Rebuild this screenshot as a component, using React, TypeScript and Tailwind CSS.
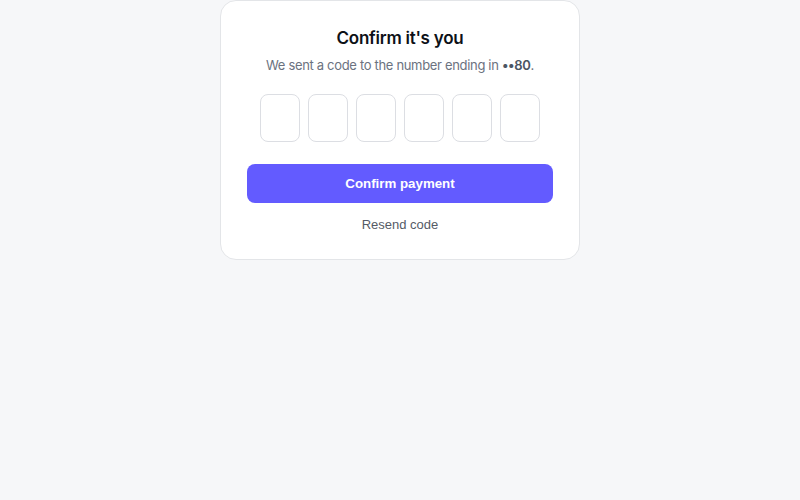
export default function App() {
  return (
    <div className="min-h-[500px] w-full bg-[#f6f7f9] flex justify-center">
      <div className="w-[360px] h-[260px] bg-white border border-[#e3e5e8] rounded-[16px] px-[26px] pt-[23px] pb-6 flex flex-col items-center" style={{ fontFamily: "Inter, 'Noto Sans', sans-serif" }}>
        <h1 className="text-[17px] leading-[28px] font-semibold tracking-[-0.015em] text-[#0d1117]">Confirm it's you</h1>
        <p className="mt-[3px] text-[13px] leading-[20px] tracking-[-0.025em] text-[#6b7280]">
          We sent a code to the number ending in <span className="font-semibold text-[#4b5563]">••80</span>.
        </p>
        <div className="mt-[19px] flex gap-2">
          {[0, 1, 2, 3, 4, 5].map((i) => (
            <div key={i} className="w-10 h-12 rounded-lg border border-[#dcdee3] bg-white" />
          ))}
        </div>
        <button
          className="mt-[22px] w-full h-[39px] rounded-lg bg-[#635bff] text-white text-[13.3px] font-bold"
          style={{ fontFamily: "'Liberation Sans', Arial, sans-serif" }}
        >
          Confirm payment
        </button>
        <div
          className="mt-[12px] text-[13px] leading-[20px] text-[#555b66]"
          style={{ fontFamily: "'Liberation Sans', Arial, sans-serif" }}
        >
          Resend code
        </div>
      </div>
    </div>
  );
}
